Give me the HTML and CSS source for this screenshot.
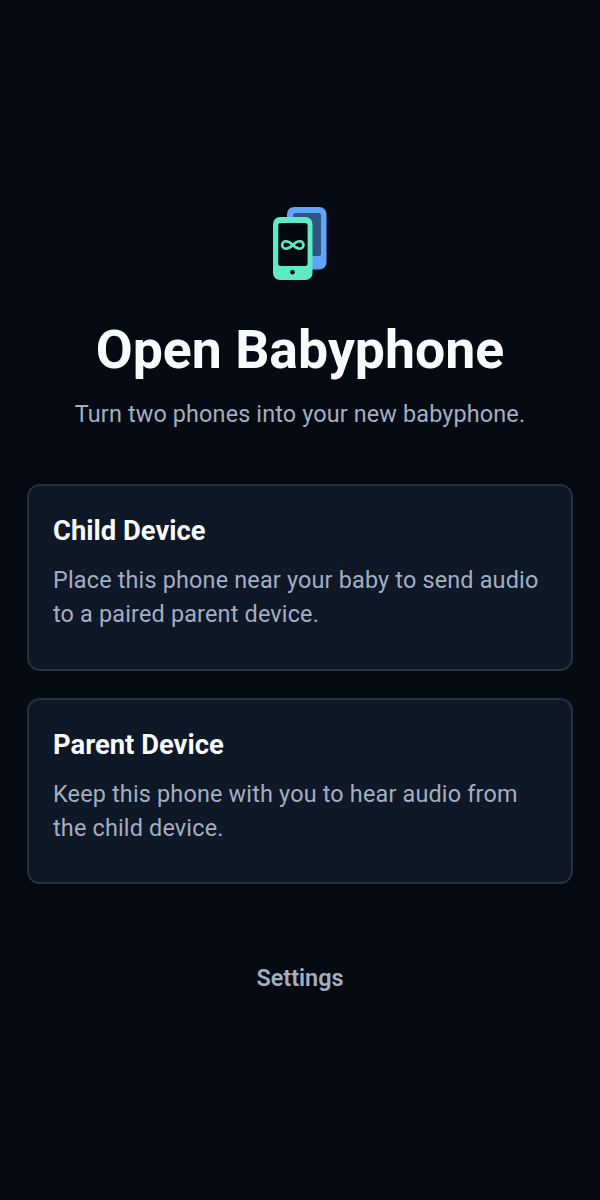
FILE: index.html
```html
<!DOCTYPE html>
<html>
<head>
    <title>Open Babyphone</title>
    <link rel="stylesheet" href="styles.css">
</head>
<body>
    <div class="home">
        <svg class="logo" width="56" height="76" viewBox="0 0 56 76">
            <rect x="15" y="1" width="39.5" height="62.5" rx="7" fill="#60a5fa"/>
            <rect x="21" y="7" width="28" height="43" rx="2.5" fill="#2f5587"/>
            <rect x="1" y="11" width="39.5" height="63" rx="7" fill="#5eeac4"/>
            <rect x="6.3" y="17" width="29.3" height="43" rx="2.5" fill="#05090f"/>
            <circle cx="20.5" cy="66.3" r="2.3" fill="#05090f"/>
            <path d="M20.800 39c-2.500-2.600-4.800-3.700-7-3.700a3.700 3.700 0 0 0 0 7.400c2.200 0 4.500-1.100 7-3.700c2.500-2.600 4.800-3.700 7-3.700a3.700 3.700 0 0 1 0 7.400c-2.200 0-4.500-1.100-7-3.700z" fill="none" stroke="#5eeac4" stroke-width="2.600"/>
        </svg>
        <h1 class="app-title">Open Babyphone</h1>
        <p class="tagline">Turn two phones into your new babyphone.</p>
        <div class="card">
            <h2>Child Device</h2>
            <p>Place this phone near your baby to send audio to a paired parent device.</p>
        </div>
        <div class="card">
            <h2>Parent Device</h2>
            <p>Keep this phone with you to hear audio from the child device.</p>
        </div>
        <div class="settings">Settings</div>
    </div>
</body>
</html>
```

FILE: styles.css
```css
body {
    font-family: Roboto, sans-serif;
    margin: 0;
    padding: 0;
    min-height: 1200px;
    background-color: #060a12;
}
.home {
    display: flex;
    flex-direction: column;
    align-items: center;
    padding: 206px 27px 0;
}
.logo {
    display: block;
}
.app-title {
    margin: 34px 0 0;
    font-size: 53.6px;
    line-height: 68px;
    font-weight: 700;
    color: #f8fafc;
}
.tagline {
    margin: 13px 0 0;
    font-size: 23.4px;
    line-height: 34px;
    letter-spacing: 0.14px;
    color: #a3aec2;
}
.card {
    box-sizing: border-box;
    width: 546px;
    height: 186.500px;
    margin-bottom: 27px;
    padding: 27px 24px;
    border: 2px solid #263140;
    border-radius: 13px;
    background-color: #0f1827;
}
.tagline + .card {
    margin-top: 53px;
}
.card h2 {
    margin: 0;
    font-size: 27.400px;
    line-height: 36px;
    font-weight: 700;
    color: #f8fafc;
}
.card p {
    margin: 14px 0 0;
    font-size: 23.400px;
    line-height: 34px;
    letter-spacing: 0.180px;
    color: #a3aec2;
}
.settings {
    margin-top: 50px;
    font-size: 23.400px;
    line-height: 34px;
    font-weight: 600;
    color: #a3aec2;
}
```
